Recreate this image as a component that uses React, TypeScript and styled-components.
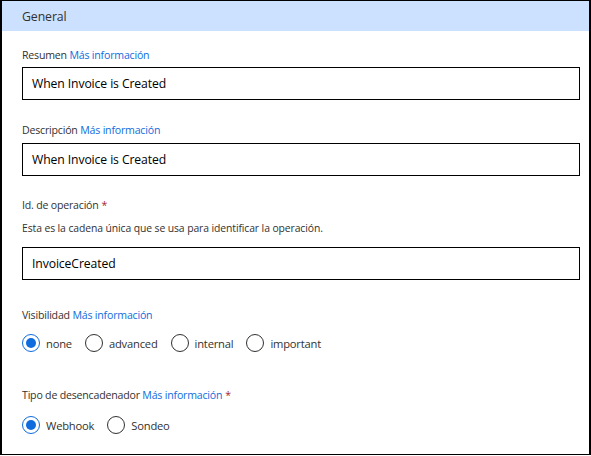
import styled, { createGlobalStyle } from "styled-components";

const GlobalStyle = createGlobalStyle`
  html, body {
    margin: 0;
    padding: 0;
    background: #ffffff;
  }
  body {
    font-family: "Open Sans", "Noto Sans", sans-serif;
    color: #323130;
  }
`;

const Panel = styled.div`
  box-sizing: border-box;
  width: 591px;
  height: 455px;
  border-style: solid;
  border-color: #000;
  border-width: 1px 2px;
  display: flex;
  flex-direction: column;
`;

const Header = styled.div`
  height: 30px;
  background: #cce0ff;
  display: flex;
  align-items: center;
  padding-left: 20px;
  font-size: 12.3px;
  letter-spacing: -0.1px;
  color: #323130;
`;

const Body = styled.div`
  display: flex;
  flex-direction: column;
  padding: 0 9px 0 20px;
`;

const Field = styled.div<{ $top: number }>`
  display: flex;
  flex-direction: column;
  margin-top: ${(p) => p.$top}px;
`;

const Label = styled.div`
  font-size: 10.6px;
  letter-spacing: -0.2px;
  line-height: 16px;
  color: #323130;
`;

const Link = styled.span`
  color: #0f6cde;
`;

const Required = styled.span`
  color: #a4262c;
  margin-left: 3px;
`;

const Helper = styled.div`
  font-size: 10.4px;
  letter-spacing: -0.1px;
  line-height: 16px;
  margin-top: 7px;
  color: #323130;
`;

const Input = styled.div<{ $top: number }>`
  box-sizing: border-box;
  height: 33px;
  margin-top: ${(p) => p.$top}px;
  border: 1px solid #000;
  display: flex;
  align-items: center;
  padding-left: 9px;
  font-size: 12.2px;
  letter-spacing: -0.1px;
  color: #000;
`;

const RadioGroup = styled.div<{ $top: number }>`
  display: flex;
  align-items: center;
  margin-top: ${(p) => p.$top}px;
  height: 18px;
`;

const RadioItem = styled.div`
  display: flex;
  align-items: center;
  margin-right: 13px;
  font-size: 11.2px;
  letter-spacing: -0.2px;
  color: #323130;
`;

const Circle = styled.span<{ $on: boolean }>`
  box-sizing: border-box;
  width: 18px;
  height: 18px;
  border-radius: 50%;
  border: 1px solid ${(p) => (p.$on ? "#0f6cde" : "#323130")};
  display: flex;
  align-items: center;
  justify-content: center;
  margin-right: 6px;
  &::after {
    content: "";
    width: 10px;
    height: 10px;
    border-radius: 50%;
    background: ${(p) => (p.$on ? "#0f6cde" : "transparent")};
  }
`;

function Radios({ options, value, top }: { options: string[]; value: string; top: number }) {
  return (
    <RadioGroup $top={top}>
      {options.map((o) => (
        <RadioItem key={o}>
          <Circle $on={o === value} />
          {o}
        </RadioItem>
      ))}
    </RadioGroup>
  );
}

export default function App() {
  return (
    <>
      <GlobalStyle />
      <Panel>
        <Header>General</Header>
        <Body>
          <Field $top={16}>
            <Label>
              Resumen <Link>Más información</Link>
            </Label>
            <Input $top={4}>When Invoice is Created</Input>
          </Field>
          <Field $top={22}>
            <Label>
              Descripción <Link>Más información</Link>
            </Label>
            <Input $top={5}>When Invoice is Created</Input>
          </Field>
          <Field $top={21}>
            <Label>
              Id. de operación<Required>*</Required>
            </Label>
            <Helper>Esta es la cadena única que se usa para identificar la operación.</Helper>
            <Input $top={11}>InvoiceCreated</Input>
          </Field>
          <Field $top={27}>
            <Label>
              Visibilidad <Link>Más información</Link>
            </Label>
            <Radios options={["none", "advanced", "internal", "important"]} value="none" top={11} />
          </Field>
          <Field $top={35}>
            <Label>
              Tipo de desencadenador <Link>Más información</Link>
              <Required>*</Required>
            </Label>
            <Radios options={["Webhook", "Sondeo"]} value="Webhook" top={13} />
          </Field>
        </Body>
      </Panel>
    </>
  );
}
